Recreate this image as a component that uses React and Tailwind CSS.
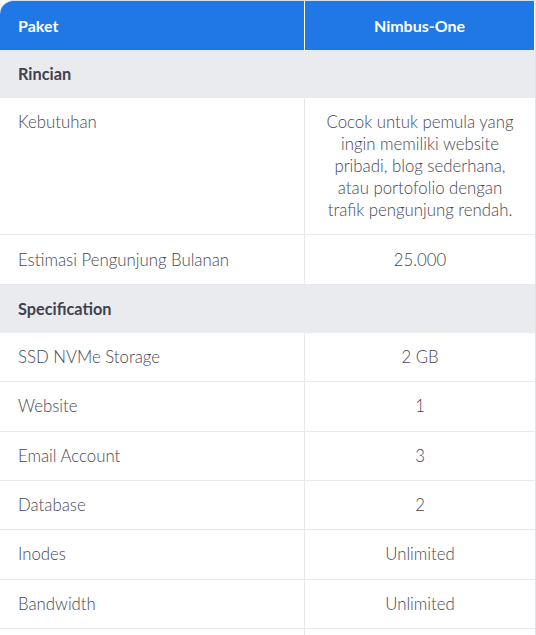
import React from 'react';

const rows1 = [
  ['Kebutuhan', 'Cocok untuk pemula yang ingin memiliki website pribadi, blog sederhana, atau portofolio dengan trafik pengunjung rendah.'],
  ['Estimasi Pengunjung Bulanan', '25.000'],
];

const rows2 = [
  ['SSD NVMe Storage', '2 GB'],
  ['Website', '1'],
  ['Email Account', '3'],
  ['Database', '2'],
  ['Inodes', 'Unlimited'],
  ['Bandwidth', 'Unlimited'],
  ['', ''],
];

const Row = ({ label, value }) => (
  <div className="grid grid-cols-[305px_1fr] border-b border-[#e8e9ed]">
    <div className="px-[18px] py-[13.2px] border-r border-[#e8e9ed] leading-[22px] min-h-[48px]">{label}</div>
    <div className="px-[16px] py-[13.2px] text-center leading-[22px]">{value}</div>
  </div>
);

const Section = ({ title }) => (
  <div className="bg-[#eaebef] px-[18px] py-[13px] leading-[22px] font-bold text-[#3f4150] text-[16.3px]">
    {title}
  </div>
);

export default function App() {
  return (
    <div className="w-[536px] h-[635px] overflow-hidden bg-white text-[16.8px] font-light text-[#464756]" style={{ fontFamily: 'Lato, "Noto Sans", sans-serif' }}>
      <div className="border-r border-[#e2e3e8]">
        <div className="grid grid-cols-[305px_1fr] bg-[#1f78e5] text-white font-bold text-[16px] rounded-tl-[14px] border-t border-[#cfe0f7] h-[50px]">
          <div className="px-[18px] flex items-center border-r border-white">Paket</div>
          <div className="flex items-center justify-center border-r border-white">Nimbus-One</div>
        </div>
        <Section title="Rincian" />
        {rows1.map(([l, v]) => <Row key={l} label={l} value={v} />)}
        <Section title="Specification" />
        {rows2.map(([l, v], i) => <Row key={i} label={l} value={v} />)}
      </div>
    </div>
  );
}
